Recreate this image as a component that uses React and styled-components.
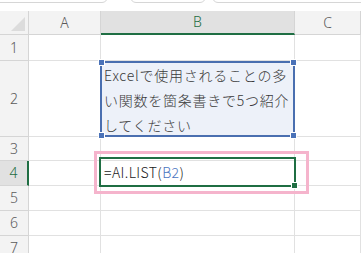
import React from "react"
import styled, { createGlobalStyle } from "styled-components"

const GlobalStyle = createGlobalStyle`
  html, body {
    margin: 0;
    padding: 0;
    background: #ffffff;
    overflow: hidden;
  }
  body {
    font-family: "Noto Sans CJK JP", "Noto Sans", sans-serif;
  }
`

const Page = styled.div`
  width: 361px;
  height: 253px;
  overflow: hidden;
  background: #ffffff;
`

const TopBar = styled.div`
  height: 11px;
  display: flex;
  overflow: hidden;
`

const Tab = styled.div`
  flex: 0 0 ${p => p.w}px;
  margin-left: ${p => p.ml || 0}px;
  height: 14px;
  margin-top: -11px;
  border: 1px solid #d6d6d6;
  border-radius: 6px;
  box-sizing: border-box;
  background: #ffffff;
`

const Sheet = styled.div`
  position: relative;
`

const Grid = styled.div`
  display: grid;
  grid-template-columns: 29px 72px 194px 1fr;
  grid-template-rows: 24px 26px 76px 24px 25px 25px 25px 25px;
`

const Cell = styled.div`
  border-right: 1px solid #e1e1e1;
  border-bottom: 1px solid #e1e1e1;
  box-sizing: border-box;
  background: #ffffff;
`

const Header = styled.div`
  box-sizing: border-box;
  background: ${p => (p.active ? "#e1e1e1" : "#f3f3f3")};
  border-right: ${p => (p.row && p.active ? "2px solid #1f6e43" : "1px solid #d5d5d5")};
  border-bottom: ${p => (!p.row && p.active ? "2px solid #1f6e43" : "1px solid #d5d5d5")};
  color: ${p => (p.active ? "#1f6e43" : "#5a5a5a")};
  font-family: "Noto Sans", "Liberation Sans", sans-serif;
  font-weight: 300;
  font-size: 14px;
  display: flex;
  align-items: center;
  justify-content: center;
  line-height: 1;
`

const Corner = styled.div`
  box-sizing: border-box;
  background: #f3f3f3;
  border-right: 1px solid #d5d5d5;
  border-bottom: 1px solid #d5d5d5;
  display: flex;
  align-items: flex-end;
  justify-content: flex-end;
  padding: 0 3px 3px 0;
`

const Triangle = styled.div`
  width: 0;
  height: 0;
  border-left: 14px solid transparent;
  border-bottom: 14px solid #dcdcdc;
`

const TextBox = styled.div`
  position: absolute;
  left: 100px;
  top: 50px;
  width: 195px;
  height: 76px;
  box-sizing: border-box;
  border: 2px solid #4a6fb0;
  background: #edf1f9;
  padding: 0 0 0 2px;
  color: #3a3a3a;
  font-family: "Noto Sans CJK JP", sans-serif;
  font-weight: 300;
  font-size: 14px;
  letter-spacing: 0.75px;
  line-height: 25px;
`

const Handle = styled.div`
  position: absolute;
  width: 5px;
  height: 5px;
  background: #4a72b8;
  border: 1px solid #ffffff;
  left: ${p => (p.right ? "auto" : "-4px")};
  right: ${p => (p.right ? "-4px" : "auto")};
  top: ${p => (p.bottom ? "auto" : "-4px")};
  bottom: ${p => (p.bottom ? "-4px" : "auto")};
`

const Highlight = styled.div`
  position: absolute;
  left: 94px;
  top: 140px;
  width: 215px;
  height: 43px;
  box-sizing: border-box;
  border: 3px solid #f5b4cc;
`

const Selection = styled.div`
  position: absolute;
  left: 99px;
  top: 146px;
  width: 197px;
  height: 30px;
  box-sizing: border-box;
  border: 2px solid #1f6e43;
  display: flex;
  align-items: center;
  padding-left: 3px;
  font-family: "Noto Sans CJK JP", sans-serif;
  font-weight: 300;
  font-size: 14px;
  color: #222222;
  letter-spacing: 0.4px;
`

const Ref = styled.span`
  color: #4a74c0;
`

const FillHandle = styled.div`
  position: absolute;
  right: -4px;
  bottom: -4px;
  width: 5px;
  height: 5px;
  background: #1f6e43;
  border: 1px solid #ffffff;
`

const rows = [1, 2, 3, 4, 5, 6, 7]

export default function App() {
  return (
    <Page>
      <GlobalStyle />
      <TopBar>
        <Tab w={118} ml={-10} />
        <Tab w={76} ml={22} />
        <Tab w={170} ml={6} />
      </TopBar>
      <Sheet>
        <Grid>
          <Corner><Triangle /></Corner>
          <Header>A</Header>
          <Header active>B</Header>
          <Header>C</Header>
          {rows.map(r => (
            <React.Fragment key={r}>
              <Header row active={r === 4}>{r}</Header>
              <Cell />
              <Cell />
              <Cell />
            </React.Fragment>
          ))}
        </Grid>
        <TextBox>
          Excelで使用されることの多い関数を箇条書きで5つ紹介してください
          <Handle />
          <Handle right />
          <Handle bottom />
          <Handle right bottom />
        </TextBox>
        <Highlight />
        <Selection>
          =AI.LIST(<Ref>B2</Ref>)
          <FillHandle />
        </Selection>
      </Sheet>
    </Page>
  )
}
